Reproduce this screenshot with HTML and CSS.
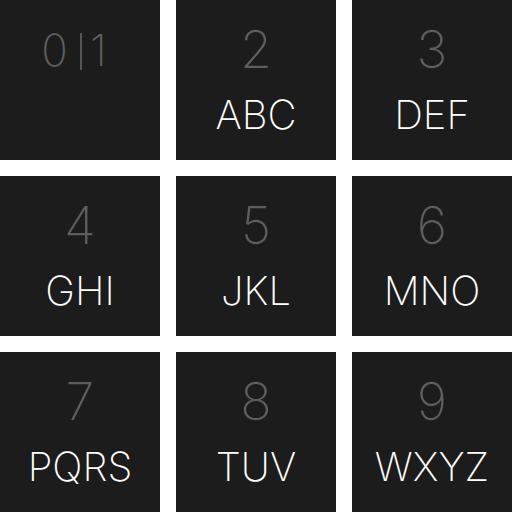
FILE: index.html
```html
<!DOCTYPE html>
<html>
<head>
<meta charset="utf-8">
<link rel="stylesheet" href="styles.css">
</head>
<body>
<div class="pad">
  <div class="key"><div class="num num-sm">0<span class="bar"></span>1</div></div>
  <div class="key"><div class="num">2</div><div class="let">ABC</div></div>
  <div class="key"><div class="num">3</div><div class="let">DEF</div></div>
  <div class="key"><div class="num">4</div><div class="let">GHI</div></div>
  <div class="key"><div class="num">5</div><div class="let">JKL</div></div>
  <div class="key"><div class="num">6</div><div class="let">MNO</div></div>
  <div class="key"><div class="num">7</div><div class="let">PQRS</div></div>
  <div class="key"><div class="num">8</div><div class="let">TUV</div></div>
  <div class="key"><div class="num">9</div><div class="let">WXYZ</div></div>
</div>
</body>
</html>
```
FILE: styles.css
```css
html, body {
  margin: 0;
  padding: 0;
  background: #ffffff;
}
.pad {
  display: grid;
  grid-template-columns: repeat(3, 160px);
  grid-auto-rows: 160px;
  gap: 16px;
  width: 512px;
  height: 512px;
}
.key {
  background: #1c1c1c;
  display: flex;
  flex-direction: column;
  align-items: center;
  padding-top: 24px;
  box-sizing: border-box;
  font-family: Inter, "Liberation Sans", sans-serif;
  font-weight: 200;
}
.num {
  font-size: 52px;
  line-height: 52px;
  height: 52px;
  color: #5e5e5e;
  display: flex;
  align-items: center;
}
.num-sm {
  font-size: 44px;
  margin-right: 12px;
}
.bar {
  display: inline-block;
  width: 2px;
  height: 37px;
  background: #555555;
  margin: 2px 8px 0 12px;
}
.let {
  margin-top: 19px;
  font-size: 40px;
  line-height: 40px;
  color: #ffffff;
}
```
